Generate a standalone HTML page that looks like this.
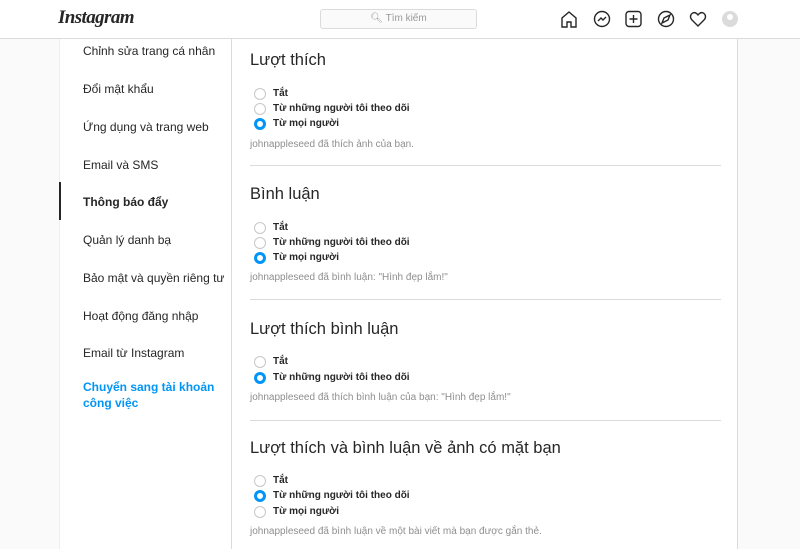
<!DOCTYPE html>
<html><head><meta charset="utf-8"><style>
*{margin:0;padding:0;box-sizing:border-box}
body{width:800px;height:545px;overflow:hidden;background:#fafafa;font-family:"Liberation Sans","DejaVu Sans",sans-serif;color:#262626;position:relative}
.hdr{position:absolute;left:0;top:0;width:800px;height:39px;background:#fff;border-bottom:1px solid #dbdbdb}
.logo{position:absolute;left:58px;top:7px;font-family:"Liberation Serif",serif;font-style:italic;font-weight:bold;font-size:19px;letter-spacing:-0.6px}
.search{position:absolute;left:320px;top:9px;width:157px;height:20px;background:#fafafa;border:1px solid #dbdbdb;border-radius:3px;font-size:10px;color:#999;text-align:center;line-height:18px}
.box{position:absolute;left:59px;top:39px;width:679px;height:510px;background:#fff;border-right:1px solid #dbdbdb;border-left:1px solid #eee}
.side{position:absolute;left:0;top:0;width:172px;height:510px;border-right:1px solid #dbdbdb}
.it{position:absolute;left:23px;font-size:12px;color:#262626;line-height:16px}
.act{font-weight:bold}
.bar{position:absolute;left:-1px;top:143px;width:2px;height:38px;background:#262626}
.blue{color:#0095f6;font-weight:bold}
.h{position:absolute;left:190px;font-size:16.5px;color:#262626}
.r{position:absolute;left:194px;font-size:10px;font-weight:bold;line-height:12px}
.r i{position:absolute;left:0;top:0;width:12px;height:12px;border:1px solid #c7c7c7;border-radius:50%}
.r i.on{border:3px solid #0095f6}
.r span{position:absolute;left:19px;top:0;white-space:nowrap}
.t{position:absolute;left:190px;font-size:10px;color:#8e8e8e}
.dv{position:absolute;left:190px;width:471px;height:1px;background:#dbdbdb}
</style></head><body>
<div class="hdr">
<div class="logo">Instagram</div>
<div class="search">&#x1F50D;&#xFE0E; Tìm kiếm</div>
<svg style="position:absolute;left:560px;top:10px" width="180" height="20" viewBox="0 0 180 20" fill="none" stroke="#262626" stroke-width="1.4">
<path d="M2 17V8l7-6 7 6v9h-5v-5H7v5z"/>
<circle cx="42" cy="9" r="7.5"/><path d="M38 11l3-3 2 2 3-3"/>
<rect x="66" y="1.5" width="15" height="15" rx="3"/><path d="M73.5 5v8M69.5 9h8"/>
<circle cx="106" cy="9" r="7.5"/><path d="M102 13l2-5 6-3-2 5z"/>
<path d="M138 16l-6-6c-2-2-2-5 0-6.5s4-1 6 1.5c2-2.5 4-3 6-1.5s2 4.5 0 6.5z"/>
<circle cx="170" cy="9" r="8" fill="#dbdbdb" stroke="none"/><circle cx="170" cy="7" r="3" fill="#fff" stroke="none"/>
</svg>
</div>
<div class="box">
<div class="side">
<div class="bar"></div>
<div class="it" style="top:4px">Chỉnh sửa trang cá nhân</div>
<div class="it" style="top:42px">Đổi mật khẩu</div>
<div class="it" style="top:80px">Ứng dụng và trang web</div>
<div class="it" style="top:118px">Email và SMS</div>
<div class="it act" style="top:155px">Thông báo đẩy</div>
<div class="it" style="top:193px">Quản lý danh bạ</div>
<div class="it" style="top:231px">Bảo mật và quyền riêng tư</div>
<div class="it" style="top:269px">Hoạt động đăng nhập</div>
<div class="it" style="top:306px">Email từ Instagram</div>
<div class="it blue" style="top:340px">Chuyển sang tài khoản<br>công việc</div>
</div>
<div class="h" style="top:12px">Lượt thích</div>
<div class="r" style="top:49px"><i></i><span>Tắt</span></div>
<div class="r" style="top:64px"><i></i><span>Từ những người tôi theo dõi</span></div>
<div class="r" style="top:79px"><i class="on"></i><span>Từ mọi người</span></div>
<div class="t" style="top:100px">johnappleseed đã thích ảnh của bạn.</div>
<div class="dv" style="top:126px"></div>
<div class="h" style="top:146px">Bình luận</div>
<div class="r" style="top:183px"><i></i><span>Tắt</span></div>
<div class="r" style="top:198px"><i></i><span>Từ những người tôi theo dõi</span></div>
<div class="r" style="top:213px"><i class="on"></i><span>Từ mọi người</span></div>
<div class="t" style="top:233px">johnappleseed đã bình luận: "Hình đẹp lắm!"</div>
<div class="dv" style="top:260px"></div>
<div class="h" style="top:281px">Lượt thích bình luận</div>
<div class="r" style="top:317px"><i></i><span>Tắt</span></div>
<div class="r" style="top:333px"><i class="on"></i><span>Từ những người tôi theo dõi</span></div>
<div class="t" style="top:353px">johnappleseed đã thích bình luận của bạn: "Hình đẹp lắm!"</div>
<div class="dv" style="top:381px"></div>
<div class="h" style="top:400px">Lượt thích và bình luận về ảnh có mặt bạn</div>
<div class="r" style="top:436px"><i></i><span>Tắt</span></div>
<div class="r" style="top:451px"><i class="on"></i><span>Từ những người tôi theo dõi</span></div>
<div class="r" style="top:467px"><i></i><span>Từ mọi người</span></div>
<div class="t" style="top:487px">johnappleseed đã bình luận về một bài viết mà bạn được gắn thẻ.</div>
</div>
</body></html>
